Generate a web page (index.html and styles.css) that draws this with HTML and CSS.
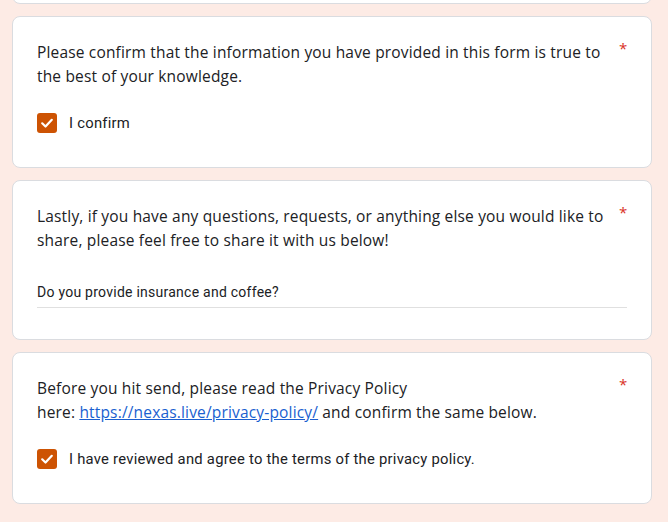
FILE: index.html
```html
<!DOCTYPE html>
<html lang="en">
<head>
<meta charset="utf-8">
<link rel="stylesheet" href="styles.css">
</head>
<body>
<div class="page">
  <div class="card card-prev"></div>

  <div class="card">
    <div class="q-head">
      <div class="q-title">Please confirm that the information you have provided in this form is true to the best of your knowledge.</div>
      <span class="req">*</span>
    </div>
    <div class="check-row">
      <span class="box"><svg viewBox="0 0 20 20" width="20" height="20"><path d="M5.2 10.3 L8.5 13.5 L14.8 6.8" fill="none" stroke="#fff" stroke-width="2.2" stroke-linecap="round" stroke-linejoin="round"/></svg></span>
      <span class="check-label">I confirm</span>
    </div>
  </div>

  <div class="card">
    <div class="q-head">
      <div class="q-title">Lastly, if you have any questions, requests, or anything else you would like to share, please feel free to share it with us below!</div>
      <span class="req">*</span>
    </div>
    <div class="answer">Do you provide insurance and coffee?</div>
  </div>

  <div class="card">
    <div class="q-head">
      <div class="q-title">Before you hit send, please read the Privacy Policy<br>here: <a class="link" href="#">https://nexas.live/privacy-policy/</a> and confirm the same below.</div>
      <span class="req">*</span>
    </div>
    <div class="check-row">
      <span class="box"><svg viewBox="0 0 20 20" width="20" height="20"><path d="M5.2 10.3 L8.5 13.5 L14.8 6.8" fill="none" stroke="#fff" stroke-width="2.2" stroke-linecap="round" stroke-linejoin="round"/></svg></span>
      <span class="check-label">I have reviewed and agree to the terms of the privacy policy.</span>
    </div>
  </div>
</div>
</body>
</html>
```

FILE: styles.css
```css
* { box-sizing: border-box; }
html, body { margin: 0; padding: 0; }
body {
  background: #fdebe5;
  font-family: "Open Sans", "Noto Sans", sans-serif;
  color: #202124;
}
.page {
  width: 640px;
  margin-left: 12px;
  margin-top: -59px;
  display: flex;
  flex-direction: column;
  gap: 12px;
}
.card {
  background: #fff;
  border: 1px solid #dadce0;
  border-radius: 8px;
  padding: 23px 24px 24px 24px;
}
.card-prev { height: 63px; }
.q-head {
  display: flex;
  align-items: flex-start;
}
.q-title {
  flex: 1;
  font-size: 15.5px;
  line-height: 24px;
  letter-spacing: 0.17px;
  padding-right: 2px;
}
.req {
  color: #d93025;
  font-size: 15px;
  line-height: 24px;
  width: 8px;
  text-align: right;
  margin-top: -4px;
}
.check-row {
  display: flex;
  align-items: center;
  gap: 12px;
  margin-top: 15px;
  height: 40px;
}
.box {
  width: 20px;
  height: 20px;
  border-radius: 3px;
  background: #cd5303;
  display: flex;
}
.check-label {
  font-family: Roboto, "Liberation Sans", sans-serif;
  font-size: 14.8px;
  letter-spacing: 0.25px;
  color: #202124;
}
.answer {
  margin-top: 30px;
  font-family: Roboto, "Liberation Sans", sans-serif;
  font-size: 14px;
  letter-spacing: 0.25px;
  line-height: 20px;
  padding-bottom: 5px;
  border-bottom: 1px solid #e0e0e0;
  margin-bottom: 7px;
}
.link {
  color: #1a5fd0;
  text-decoration: underline;
}
```
